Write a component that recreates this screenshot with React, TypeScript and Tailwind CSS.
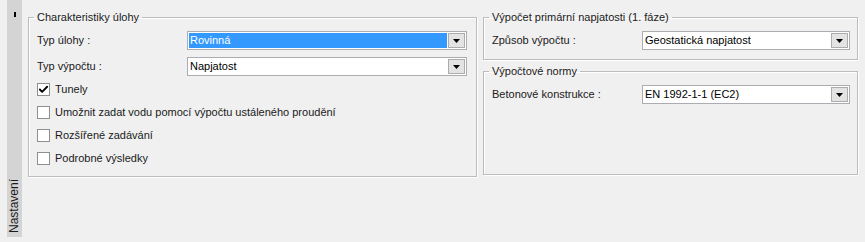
import { Check } from "lucide-react";

const font = { fontFamily: '"Liberation Sans", Arial, sans-serif' };

function Arrow() {
  return (
    <div className="w-[17px] h-[15px] border border-[#acacac] bg-[#e3e3e3] flex items-center justify-center">
      <svg width="7" height="4" viewBox="0 0 7 4">
        <path d="M0 0h7L3.5 4z" fill="#000" />
      </svg>
    </div>
  );
}

function Select({ value, selected, width }: { value: string; selected?: boolean; width: string }) {
  return (
    <div className={`${width} h-[19px] bg-white border border-[#abadb3] flex items-center pl-[1px] pr-[1px] gap-[1px]`}>
      <div
        className={`flex-1 h-[15px] flex items-center pl-[1px] ${
          selected ? "bg-[#3399ff] text-white" : "text-black"
        }`}
      >
        {value}
      </div>
      <Arrow />
    </div>
  );
}

function Box({ checked, label }: { checked?: boolean; label: string }) {
  return (
    <div className="h-[23px] flex items-center gap-[5px]">
      <div className="w-[13px] h-[13px] border border-[#8e8f8f] bg-white flex items-center justify-center">
        {checked && <Check size={11} strokeWidth={4} className="text-black" />}
      </div>
      <span>{label}</span>
    </div>
  );
}

function Group({ title, className, children }: { title: string; className: string; children: React.ReactNode }) {
  return (
    <fieldset className={`border border-[#bcbcbc] shadow-[inset_1px_1px_0_#fff,1px_1px_0_#fff] ${className}`}>
      <legend className="ml-[-3px] px-[3px] leading-[13px]">{title}</legend>
      {children}
    </fieldset>
  );
}

export default function App() {
  return (
    <div className="w-[865px] h-[242px] bg-[#f0f0f0] flex text-[11px] text-[#1a1a1a]" style={font}>
      {/* side tab */}
      <div className="pl-[7px] h-[237px]">
        <div className="w-[15px] h-full bg-[#d4d4d4] flex flex-col items-center justify-between pt-[12px] pb-[4px]">
          <div className="w-[2px] h-[5px] bg-black" />
          <div className="[writing-mode:vertical-rl] rotate-180 text-[12px] leading-[15px]">Nastavení</div>
        </div>
      </div>

      <div className="flex gap-[6px] pl-[6px] pt-[11px]">
        <Group title="Charakteristiky úlohy" className="w-[449px] h-[166px] pl-[8px] pr-[9px]">
          <div className="flex flex-col pt-[7px]">
            <div className="flex items-center justify-between h-[19px]">
              <span>Typ úlohy :</span>
              <Select value="Rovinná" selected width="w-[280px]" />
            </div>
            <div className="flex items-center justify-between h-[19px] mt-[7px]">
              <span>Typ výpočtu :</span>
              <Select value="Napjatost" width="w-[280px]" />
            </div>
            <div className="mt-[2px]">
              <Box checked label="Tunely" />
              <Box label="Umožnit zadat vodu pomocí výpočtu ustáleného proudění" />
              <Box label="Rozšířené zadávání" />
              <Box label="Podrobné výsledky" />
            </div>
          </div>
        </Group>

        <div className="flex flex-col gap-[5px]">
          <Group title="Výpočet primární napjatosti (1. fáze)" className="w-[375px] h-[49px] pl-[8px] pr-[7px]">
            <div className="flex items-center justify-between h-[19px] mt-[7px]">
              <span>Způsob výpočtu :</span>
              <Select value="Geostatická napjatost" width="w-[208px]" />
            </div>
          </Group>
          <Group title="Výpočtové normy" className="w-[375px] h-[110px] pl-[8px] pr-[7px]">
            <div className="flex items-center justify-between h-[19px] mt-[7px]">
              <span>Betonové konstrukce :</span>
              <Select value="EN 1992-1-1 (EC2)" width="w-[208px]" />
            </div>
          </Group>
        </div>
      </div>
    </div>
  );
}
